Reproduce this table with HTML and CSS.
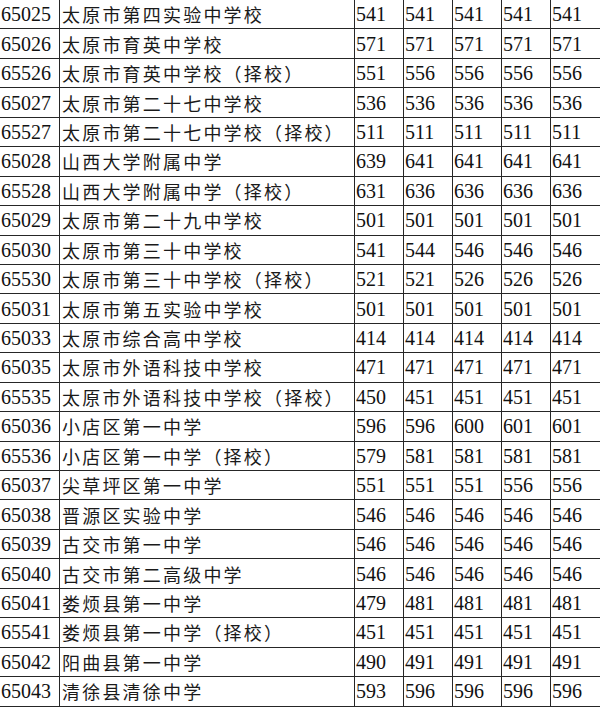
FILE: index.html
```html
<!DOCTYPE html>
<html lang="zh-CN">
<head>
<meta charset="utf-8">
<title>录取分数线</title>
<link rel="stylesheet" href="styles.css">
</head>
<body>
<table class="scores">
<colgroup>
<col class="c-code"><col class="c-name"><col class="c-num"><col class="c-num"><col class="c-num"><col class="c-num"><col class="c-last">
</colgroup>
<tbody>
<tr><td class="code">65025</td><td class="name">太原市第四实验中学校</td><td>541</td><td>541</td><td>541</td><td>541</td><td>541</td></tr>
<tr><td class="code">65026</td><td class="name">太原市育英中学校</td><td>571</td><td>571</td><td>571</td><td>571</td><td>571</td></tr>
<tr><td class="code">65526</td><td class="name">太原市育英中学校（择校）</td><td>551</td><td>556</td><td>556</td><td>556</td><td>556</td></tr>
<tr><td class="code">65027</td><td class="name">太原市第二十七中学校</td><td>536</td><td>536</td><td>536</td><td>536</td><td>536</td></tr>
<tr><td class="code">65527</td><td class="name">太原市第二十七中学校（择校）</td><td>511</td><td>511</td><td>511</td><td>511</td><td>511</td></tr>
<tr><td class="code">65028</td><td class="name">山西大学附属中学</td><td>639</td><td>641</td><td>641</td><td>641</td><td>641</td></tr>
<tr><td class="code">65528</td><td class="name">山西大学附属中学（择校）</td><td>631</td><td>636</td><td>636</td><td>636</td><td>636</td></tr>
<tr><td class="code">65029</td><td class="name">太原市第二十九中学校</td><td>501</td><td>501</td><td>501</td><td>501</td><td>501</td></tr>
<tr><td class="code">65030</td><td class="name">太原市第三十中学校</td><td>541</td><td>544</td><td>546</td><td>546</td><td>546</td></tr>
<tr><td class="code">65530</td><td class="name">太原市第三十中学校（择校）</td><td>521</td><td>521</td><td>526</td><td>526</td><td>526</td></tr>
<tr><td class="code">65031</td><td class="name">太原市第五实验中学校</td><td>501</td><td>501</td><td>501</td><td>501</td><td>501</td></tr>
<tr><td class="code">65033</td><td class="name">太原市综合高中学校</td><td>414</td><td>414</td><td>414</td><td>414</td><td>414</td></tr>
<tr><td class="code">65035</td><td class="name">太原市外语科技中学校</td><td>471</td><td>471</td><td>471</td><td>471</td><td>471</td></tr>
<tr><td class="code">65535</td><td class="name">太原市外语科技中学校（择校）</td><td>450</td><td>451</td><td>451</td><td>451</td><td>451</td></tr>
<tr><td class="code">65036</td><td class="name">小店区第一中学</td><td>596</td><td>596</td><td>600</td><td>601</td><td>601</td></tr>
<tr><td class="code">65536</td><td class="name">小店区第一中学（择校）</td><td>579</td><td>581</td><td>581</td><td>581</td><td>581</td></tr>
<tr><td class="code">65037</td><td class="name">尖草坪区第一中学</td><td>551</td><td>551</td><td>551</td><td>556</td><td>556</td></tr>
<tr><td class="code">65038</td><td class="name">晋源区实验中学</td><td>546</td><td>546</td><td>546</td><td>546</td><td>546</td></tr>
<tr><td class="code">65039</td><td class="name">古交市第一中学</td><td>546</td><td>546</td><td>546</td><td>546</td><td>546</td></tr>
<tr><td class="code">65040</td><td class="name">古交市第二高级中学</td><td>546</td><td>546</td><td>546</td><td>546</td><td>546</td></tr>
<tr><td class="code">65041</td><td class="name">娄烦县第一中学</td><td>479</td><td>481</td><td>481</td><td>481</td><td>481</td></tr>
<tr><td class="code">65541</td><td class="name">娄烦县第一中学（择校）</td><td>451</td><td>451</td><td>451</td><td>451</td><td>451</td></tr>
<tr><td class="code">65042</td><td class="name">阳曲县第一中学</td><td>490</td><td>491</td><td>491</td><td>491</td><td>491</td></tr>
<tr><td class="code">65043</td><td class="name">清徐县清徐中学</td><td>593</td><td>596</td><td>596</td><td>596</td><td>596</td></tr>
</tbody>
</table>
</body>
</html>
```

FILE: styles.css
```css
html, body {
  margin: 0;
  padding: 0;
  background: #ffffff;
  overflow: hidden;
}

.scores {
  border-collapse: collapse;
  table-layout: fixed;
  width: 604px;
  margin: -1px 0 0 -2px;
  font-family: "Liberation Serif", "Noto Sans CJK SC", serif;
  font-size: 20px;
  color: #111111;
}

.c-code { width: 61px; }
.c-name { width: 295px; }
.c-num { width: 49px; }
.c-last { width: 52px; }

.scores tr {
  height: 29.45px;
}

.scores td {
  border: 1px solid #262626;
  padding: 0 0 0 1px;
  vertical-align: middle;
  white-space: nowrap;
  overflow: hidden;
  line-height: 20px;
}

.scores td.code {
  padding-left: 2px;
}

.scores td.name {
  font-family: "Noto Sans CJK SC", sans-serif;
  font-size: 18px;
  letter-spacing: 2.2px;
  padding-left: 2px;
  color: #1a1a1a;
}
```
